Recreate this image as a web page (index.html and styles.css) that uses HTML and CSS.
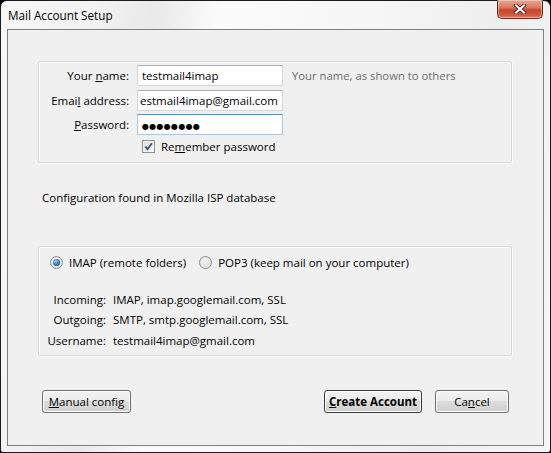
FILE: index.html
```html
<!DOCTYPE html>
<html>
<head>
<meta charset="utf-8">
<link rel="stylesheet" href="styles.css">
</head>
<body>
<div class="window">
  <div class="titlebar">
    <span class="title">Mail Account Setup</span>
    <button class="close" aria-label="Close">
      <svg width="14" height="10" viewBox="0 0 14 10">
        <path d="M3 1.5 L11 8.5 M11 1.5 L3 8.5" stroke="#5a2a22" stroke-width="4" stroke-linecap="square" fill="none"/>
        <path d="M3 1.5 L11 8.5 M11 1.5 L3 8.5" stroke="#ffffff" stroke-width="2" stroke-linecap="square" fill="none"/>
      </svg>
    </button>
  </div>
  <div class="panel">
    <div class="group identity">
      <label class="lbl">Your <u>n</u>ame:</label>
      <div class="input">testmail4imap</div>
      <span class="hint">Your name, as shown to others</span>

      <label class="lbl">Emai<u>l</u> address:</label>
      <div class="input clip">estmail4imap@gmail.com</div>
      <span></span>

      <label class="lbl"><u>P</u>assword:</label>
      <div class="input focus"><span class="dots">●●●●●●●●</span></div>
      <span></span>

      <span></span>
      <div class="check-row">
        <span class="checkbox">
          <svg width="9" height="9" viewBox="0 0 9 9"><path d="M1.3 4.6 L3.6 7.2 L7.8 1.3" stroke="#3f5585" stroke-width="1.9" fill="none"/></svg>
        </span>
        <span>Re<u>m</u>ember password</span>
      </div>
      <span></span>
    </div>

    <div class="status">Configuration found in Mozilla ISP database</div>

    <div class="group config">
      <div class="radios">
        <span class="radio-item"><span class="radio checked"></span>IMAP (remote folders)</span>
        <span class="radio-item"><span class="radio"></span>POP3 (keep mail on your computer)</span>
      </div>
      <div class="info">
        <span class="key">Incoming:</span><span>IMAP, imap.googlemail.com, SSL</span>
        <span class="key">Outgoing:</span><span>SMTP, smtp.googlemail.com, SSL</span>
        <span class="key">Username:</span><span>testmail4imap@gmail.com</span>
      </div>
    </div>

    <div class="buttons">
      <button class="btn manual"><u>M</u>anual config</button>
      <span class="spacer"></span>
      <button class="btn default"><u>C</u>reate Account</button>
      <button class="btn cancel">Ca<u>n</u>cel</button>
    </div>
  </div>
</div>
</body>
</html>
```
FILE: styles.css
```css
html, body {
  margin: 0;
  padding: 0;
  background: #000;
}
body {
  width: 551px;
  height: 453px;
  font-family: "Open Sans", "Noto Sans", sans-serif;
  font-size: 11.5px;
  color: #000;
}
.window {
  box-sizing: border-box;
  width: 551px;
  height: 453px;
  border: 1px solid #1c1c1c;
  border-radius: 7px 7px 3px 3px;
  background: linear-gradient(100deg, #f7f7f7 0%, #f2f2f2 15%, #e9e9e9 25%, #fbfbfb 35%, #f6f6f6 60%, #eeeeee 80%, #f7f7f7 100%);
  padding: 0 6px 6px 6px;
  display: flex;
  flex-direction: column;
}
.titlebar {
  height: 28px;
  flex: none;
  display: flex;
  align-items: flex-start;
  justify-content: space-between;
}
.title {
  margin-top: 6px;
  margin-left: 1px;
  font-size: 11.7px;
  color: #000;
}
.close {
  margin: -1px 1px 0 0;
  width: 46px;
  height: 19px;
  padding: 0;
  border: 1px solid #6b2c22;
  border-top: none;
  border-radius: 0 0 5px 5px;
  background: linear-gradient(#e9a796 0%, #dc7c66 40%, #c8452c 55%, #cf5a3f 85%, #e08a6f 100%);
  box-shadow: inset 0 0 0 1px rgba(255,255,255,0.35);
  display: flex;
  align-items: center;
  justify-content: center;
}
.panel {
  flex: 1;
  border: 1px solid #7f7f7f;
  background: #f0f0f0;
  padding: 31px 31px 0 30px;
  display: flex;
  flex-direction: column;
}
.group {
  border: 1px solid #d9d9d9;
  border-radius: 2px;
  box-shadow: inset 1px 1px 0 #fbfbfb, 1px 1px 0 #fbfbfb;
}
.identity {
  padding-top: 3px;
  box-sizing: border-box;
  height: 102px;
  display: grid;
  grid-template-columns: 90px 146px auto;
  grid-template-rows: 21px 21px 21px 13px;
  column-gap: 8px;
  row-gap: 3.5px;
  align-items: center;
}
.identity .check-row { margin-top: 3px; }
.lbl {
  text-align: right;
  white-space: nowrap;
}
.input {
  box-sizing: border-box;
  height: 21px;
  border: 1px solid #d3d6dc;
  border-top-color: #abadb3;
  background: #fff;
  padding: 0 4px;
  line-height: 19px;
  white-space: nowrap;
  overflow: hidden;
}
.input.clip { padding-left: 2px; }
.input.focus {
  border-color: #a9c8e4;
  border-top-color: #5d8fbd;
}
.dots {
  font-family: "DejaVu Sans", sans-serif;
  font-size: 8px;
  letter-spacing: 0.3px;
}
.hint {
  color: #6d6d6d;
  padding-left: 1px;
  white-space: nowrap;
  font-size: 11.3px;
}
.check-row {
  display: flex;
  align-items: center;
  padding-left: 5px;
  gap: 6px;
}
.checkbox {
  box-sizing: border-box;
  width: 13px;
  height: 13px;
  border: 1px solid #8e8f8f;
  background: linear-gradient(135deg, #dcdcdc, #f8f8f8);
  box-shadow: inset 0 0 0 1px #f4f4f4;
  display: flex;
  align-items: center;
  justify-content: center;
}
.status {
  margin-top: 27px;
  padding-left: 4px;
  line-height: 16px;
}
.config {
  margin-top: 40px;
  height: 110px;
  box-sizing: border-box;
  padding: 8px 0 0 11px;
  display: flex;
  flex-direction: column;
}
.radios {
  display: flex;
  align-items: center;
  height: 14px;
}
.radio-item {
  display: flex;
  align-items: center;
  gap: 6px;
  margin-right: 13px;
}
.radio {
  box-sizing: border-box;
  width: 13px;
  height: 13px;
  border-radius: 50%;
  border: 1px solid #8e8f8f;
  background: radial-gradient(circle at 40% 40%, #f6f6f6, #d6d6d6);
  display: flex;
  align-items: center;
  justify-content: center;
}
.radio.checked::after {
  content: "";
  width: 7px;
  height: 7px;
  border-radius: 50%;
  background: radial-gradient(circle at 40% 35%, #a9d3f6 0%, #3e7fc0 45%, #1a4a7c 100%);
}
.info {
  margin-top: 20px;
  margin-left: -3px;
  display: grid;
  grid-template-columns: 59px auto;
  column-gap: 7px;
  grid-auto-rows: 20.5px;
  align-items: center;
}
.key {
  text-align: right;
  white-space: nowrap;
}
.buttons {
  margin-top: 34px;
  padding-left: 4px;
  padding-right: 3px;
  display: flex;
  align-items: center;
}
.spacer { flex: 1; }
.btn {
  box-sizing: border-box;
  height: 23px;
  border: 1px solid #707070;
  border-radius: 3px;
  background: linear-gradient(#f2f2f2 0%, #ebebeb 49%, #dddddd 50%, #cfcfcf 100%);
  box-shadow: inset 0 0 0 1px #fcfcfc;
  font-family: "Open Sans", "Noto Sans", sans-serif;
  font-size: 11.5px;
  color: #000;
  padding: 0;
}
.manual { width: 89px; }
.default {
  width: 98px;
  font-weight: bold;
  border-color: #3c3c3c;
}
.cancel {
  width: 74px;
  margin-left: 13px;
}
```
